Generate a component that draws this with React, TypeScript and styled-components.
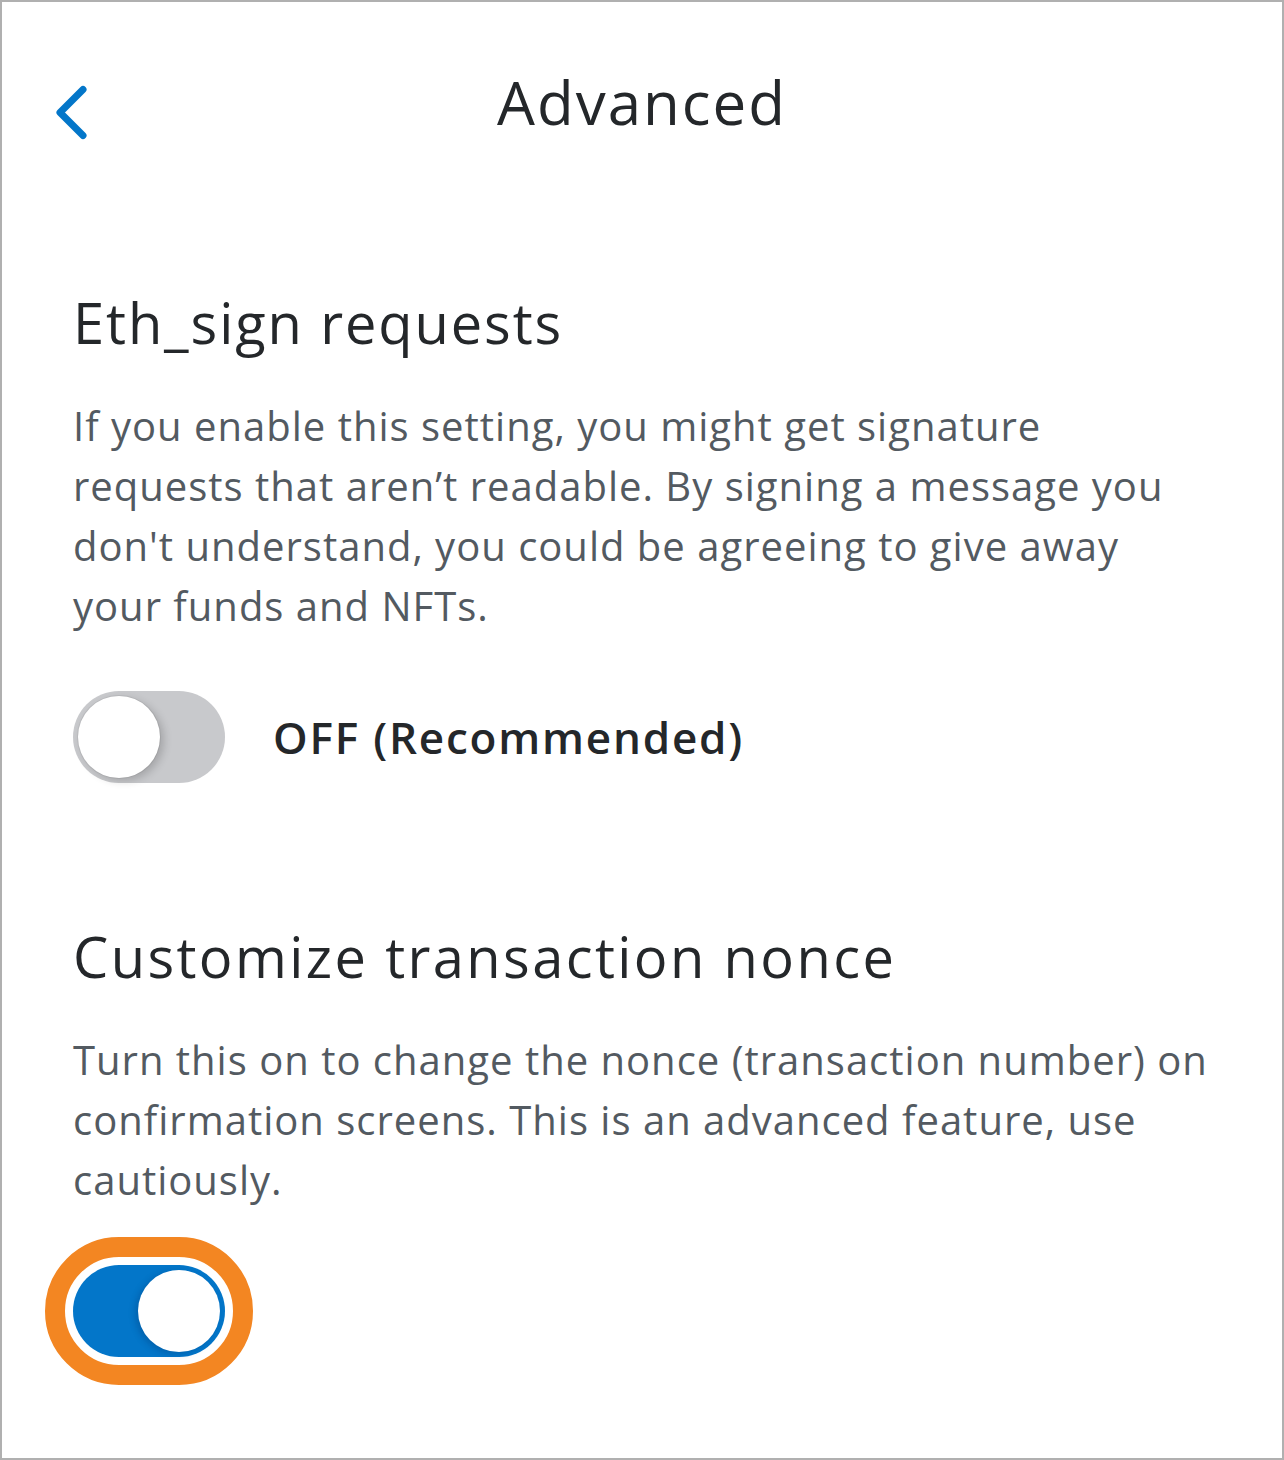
import React from "react";
import styled, { createGlobalStyle } from "styled-components";

const Global = createGlobalStyle`
  html, body { margin: 0; padding: 0; background: #ffffff; }
  body { font-family: "Open Sans", Lato, sans-serif; -webkit-font-smoothing: antialiased; }
  * { box-sizing: border-box; }
`;

const Frame = styled.div`
  width: 1284px;
  height: 1460px;
  border: 2px solid #b0b0b0;
  background: #ffffff;
  display: flex;
  flex-direction: column;
`;

const Header = styled.header`
  position: relative;
  height: 284px;
  display: flex;
  align-items: flex-start;
  justify-content: center;
  padding-top: 62px;
`;

const BackButton = styled.button`
  position: absolute;
  left: 44px;
  top: 78px;
  width: 48px;
  height: 66px;
  padding: 0;
  border: none;
  background: none;
  display: flex;
  align-items: center;
  justify-content: center;
  cursor: pointer;
`;

const Title = styled.h1`
  margin: 0;
  font-size: 60px;
  line-height: 76px;
  font-weight: 400;
  letter-spacing: 2px;
  color: #24272a;
`;

const Content = styled.main`
  padding: 0 71px;
  display: flex;
  flex-direction: column;
`;

const Section = styled.section<{ $gap: number }>`
  display: flex;
  flex-direction: column;
  margin-bottom: ${(p) => p.$gap}px;
`;

const SectionTitle = styled.h2<{ $spacing: number }>`
  margin: 0 0 38px;
  font-size: 56px;
  line-height: 72px;
  font-weight: 400;
  letter-spacing: ${(p) => p.$spacing}px;
  color: #24272a;
`;

const Body = styled.p`
  margin: 0 0 55px;
  font-size: 40px;
  line-height: 60px;
  letter-spacing: 1px;
  color: #535a61;
`;

const Line = styled.span`
  display: block;
  white-space: nowrap;
`;

const ToggleRow = styled.div`
  display: flex;
  align-items: center;
  gap: 48px;
`;

const Ring = styled.div<{ $focused: boolean }>`
  display: inline-flex;
  margin: ${(p) => (p.$focused ? "-28px" : "0")};
  padding: ${(p) => (p.$focused ? "8px" : "0")};
  border: ${(p) => (p.$focused ? "20px solid #f38622" : "none")};
  border-radius: 80px;
`;

const Track = styled.div<{ $on: boolean }>`
  width: 152px;
  height: 92px;
  border-radius: 46px;
  background: ${(p) => (p.$on ? "#0376c9" : "#c8c9cc")};
  display: flex;
  align-items: center;
  justify-content: ${(p) => (p.$on ? "flex-end" : "flex-start")};
  padding: 0 5px;
`;

const Knob = styled.div<{ $on: boolean }>`
  width: 82px;
  height: 82px;
  border-radius: 50%;
  background: #ffffff;
  box-shadow: ${(p) =>
    p.$on
      ? "-3px 2px 6px rgba(0, 40, 90, 0.25)"
      : "0 0 0 1px rgba(0, 0, 0, 0.06), 4px 3px 8px rgba(0, 0, 0, 0.18)"};
`;

const ToggleLabel = styled.span`
  font-size: 44px;
  font-weight: 600;
  letter-spacing: 1.8px;
  color: #24272a;
`;

const Toggle = ({ on, focused = false }: { on: boolean; focused?: boolean }) => (
  <Ring $focused={focused}>
    <Track $on={on}>
      <Knob $on={on} />
    </Track>
  </Ring>
);

const ChevronLeft = () => (
  <svg width="48" height="66" viewBox="0 0 48 66" fill="none">
    <path
      d="M37 9.5 L14 32.5 L37 55.5"
      stroke="#0376c9"
      strokeWidth="7"
      strokeLinecap="round"
      strokeLinejoin="round"
    />
  </svg>
);

export default function App() {
  return (
    <>
      <Global />
      <Frame>
        <Header>
          <BackButton aria-label="Back">
            <ChevronLeft />
          </BackButton>
          <Title>Advanced</Title>
        </Header>
        <Content>
          <Section $gap={137}>
            <SectionTitle $spacing={1.9}>Eth_sign requests</SectionTitle>
            <Body>
              <Line>If you enable this setting, you might get signature</Line>
              <Line>requests that aren’t readable. By signing a message you</Line>
              <Line>don't understand, you could be agreeing to give away</Line>
              <Line>your funds and NFTs.</Line>
            </Body>
            <ToggleRow>
              <Toggle on={false} />
              <ToggleLabel>OFF (Recommended)</ToggleLabel>
            </ToggleRow>
          </Section>
          <Section $gap={0}>
            <SectionTitle $spacing={2.4}>Customize transaction nonce</SectionTitle>
            <Body>
              <Line>Turn this on to change the nonce (transaction number) on</Line>
              <Line>confirmation screens. This is an advanced feature, use</Line>
              <Line>cautiously.</Line>
            </Body>
            <ToggleRow>
              <Toggle on focused />
            </ToggleRow>
          </Section>
        </Content>
      </Frame>
    </>
  );
}
